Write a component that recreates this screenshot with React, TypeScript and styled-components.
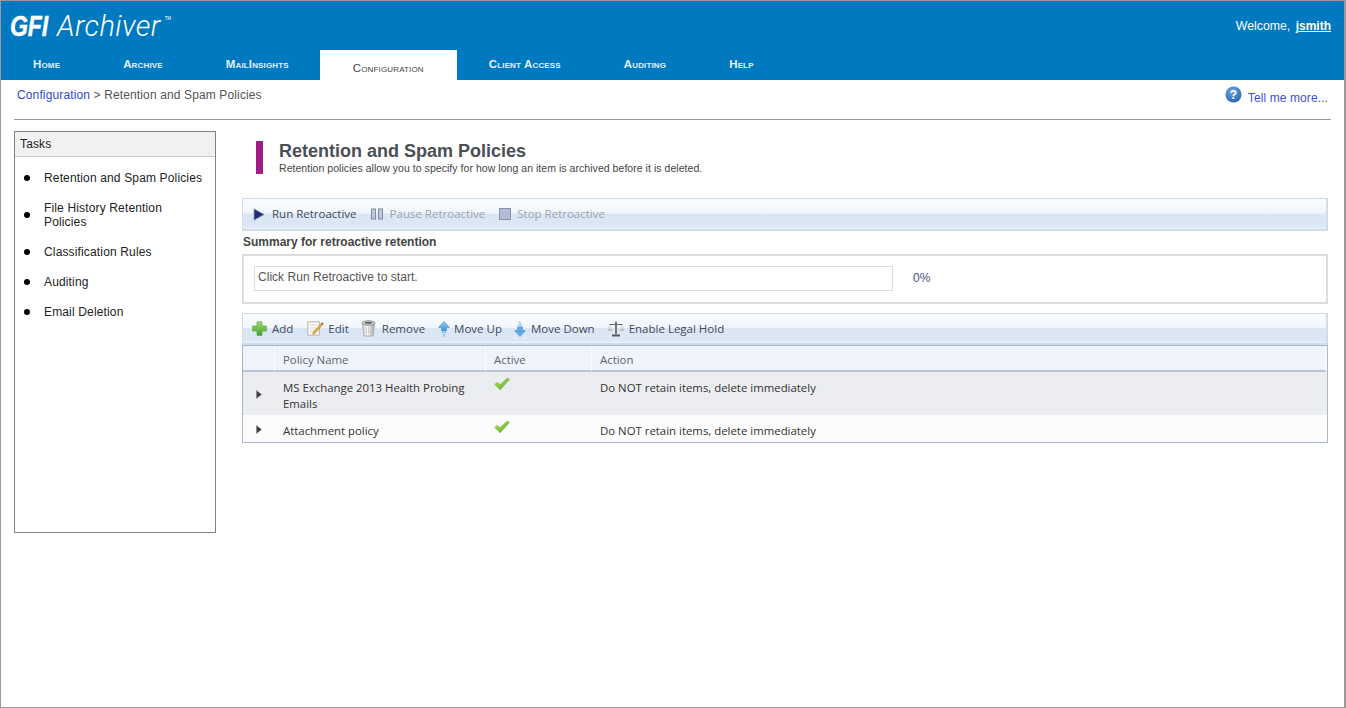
import React from "react";
import styled, { createGlobalStyle } from "styled-components";

const Global = createGlobalStyle`
  html, body { margin: 0; padding: 0; background: #fff; }
  body { font-family: "Liberation Sans", Arial, sans-serif; font-size: 12px; color: #333; }
`;
const uiFont = `"Open Sans", "Noto Sans", sans-serif`;

const Page = styled.div`
  box-sizing: border-box; width: 1346px; height: 708px; border: 1px solid #9a9a9a; border-right-width: 2px;
  overflow: hidden; display: flex; flex-direction: column; background: #fff;
`;
const Header = styled.header`background: #0079c1; height: 79px; display: flex; flex-direction: column;`;
const TopRow = styled.div`height: 49px; display: flex; justify-content: space-between; align-items: flex-start;`;
const Logo = styled.div`
  margin: 8px 0 0 9px; color: #fff; font-size: 29px; line-height: 34px; font-style: italic; display: flex;
  b { display: block; width: 47px; font-weight: 700; letter-spacing: -0.3px; white-space: nowrap; transform: scaleX(0.8); transform-origin: left center; -webkit-text-stroke: 0.4px #fff; }
  span { font-family: Roboto, "Liberation Sans", sans-serif; font-weight: 300; letter-spacing: 0.4px; }
  sup { font-size: 4.5px; line-height: 8px; font-style: normal; margin: 6px 0 0 4px; }
`;
const Welcome = styled.div`
  margin: 17px 13px 0 0; color: #fff; font-size: 12.3px; line-height: 16px;
  a { color: #fff; font-weight: 700; text-decoration: underline; margin-left: 2px; font-size: 12px; }
`;
const Nav = styled.nav`height: 30px; display: flex;`;
const Tab = styled.a<{ $active?: boolean }>`
  padding: ${(p) => (p.$active ? "11px 33px 0" : "7px 31px 0 32px")}; box-sizing: border-box; height: 30px;
  font-variant: small-caps; font-size: 11.5px; line-height: 14px; letter-spacing: 0.15px; font-weight: ${(p) => (p.$active ? 400 : 700)};
  color: ${(p) => (p.$active ? "#444" : "#e6f1f8")}; background: ${(p) => (p.$active ? "#fff" : "transparent")};
`;
const Crumbs = styled.div`
  box-sizing: border-box; display: flex; justify-content: space-between; margin-left: 13px; padding-left: 3px;
  border-bottom: 1px solid #999; width: 1317px; flex: 0 0 40px; height: 40px;
`;
const CrumbText = styled.div`
  padding-top: 8px; line-height: 15px; color: #555; font-size: 12px; letter-spacing: 0.13px;
  a { color: #2f49d1; }
`;
const Help = styled.a`
  display: flex; align-items: flex-start; color: #3f51d5; font-size: 12px; letter-spacing: 0.1px; margin: 6px 3px 0 0; gap: 6px; line-height: 14px;
  span { padding-top: 5px; }
`;
const Content = styled.div`display: flex; padding: 11px 0 0 13px; gap: 26px; align-items: flex-start;`;
const Sidebar = styled.aside`box-sizing: border-box; width: 202px; height: 402px; border: 1px solid #808080; flex: none;`;
const SideTitle = styled.div`height: 25px; box-sizing: border-box; background: #f1f1f1; border-bottom: 1px solid #c8c8c8; padding: 5px 5px; line-height: 14px; color: #222; letter-spacing: 0.15px;`;
const TaskList = styled.ul`list-style: none; margin: 0; padding: 14px 0 0 9px; display: flex; flex-direction: column; gap: 16px;`;
const TaskItem = styled.li`display: flex; align-items: center; gap: 14px; line-height: 14px; color: #222; letter-spacing: 0.15px;
  &::before { content: ""; width: 6px; height: 6px; border-radius: 50%; background: #000; flex: none; }
`;
const TaskLabel = styled.span`max-width: 160px;`;
const Main = styled.main`width: 1086px; flex: none;`;
const TitleBlock = styled.div`display: flex; margin: 10px 0 24px 14px; height: 33px; gap: 16px;`;
const Accent = styled.div`width: 7px; background: #a01c82;`;
const TitleText = styled.div`
  h1 { margin: 0; font-size: 18px; line-height: 20px; font-weight: 700; color: #4a4f55; }
  p { margin: 0; font-size: 10.5px; line-height: 14px; color: #444; letter-spacing: 0.045px; }
`;
const Toolbar = styled.div<{ $h: number; $pl: number }>`
  box-sizing: border-box; height: ${(p) => p.$h}px; display: flex; align-items: center; padding: 0 0 0 ${(p) => p.$pl}px;
  border: 2px solid #d0dce8; border-width: 1px 2px 2px 1px;
  background: linear-gradient(#fafcfe 0%, #f0f6fc 48%, #dbe6f4 49%, #dce7f5 90%, #eaf1f9 100%);
  font-family: ${uiFont}; font-size: 11.5px; color: #414b5a;
`;
const ToolButton = styled.button<{ $disabled?: boolean; $gap?: number; $after?: number }>`
  all: unset; display: flex; align-items: center; gap: ${(p) => p.$gap ?? 6}px; margin-right: ${(p) => p.$after ?? 13}px;
  color: ${(p) => (p.$disabled ? "#9aa3ae" : "#414b5a")}; line-height: 16px; white-space: nowrap;
`;
const SummaryTitle = styled.div`margin: 4px 0 4px 1px; font-weight: 700; color: #444; line-height: 15px; font-size: 12px;`;
const SummaryBox = styled.div`box-sizing: border-box; height: 50px; border: 2px solid #dcdcdc; display: flex; align-items: center; padding: 0 0 1px 10px; margin-bottom: 9px;`;
const Progress = styled.div`box-sizing: border-box; width: 639px; height: 25px; border: 1px solid #dcdcdc; padding: 3px 3px; line-height: 14px; color: #555; letter-spacing: 0.03px;`;
const Percent = styled.div`margin: 0 0 2px 20px; color: #46507a; font-size: 12px;`;
const GridWrap = styled.div`border: 1px solid #a9b6ca; box-sizing: border-box;`;
const Table = styled.table`
  width: 100%; border-collapse: separate; border-spacing: 0; table-layout: fixed; font-family: ${uiFont}; font-size: 11.4px; color: #333;
`;
const HeadCell = styled.th<{ $w?: number }>`
  width: ${(p) => (p.$w ? `${p.$w}px` : "auto")}; height: 26px; box-sizing: border-box; background: #eff3fc; padding: 3px 8px 0; text-align: left;
  font-weight: 400; color: #5b6470; border-bottom: 2px solid #bac5d6; border-right: 1px solid #f9fbff;
  &:last-child { border-right: 2px solid #f9fbff; }
`;
const Row = styled.tr<{ $alt?: boolean }>`background: ${(p) => (p.$alt ? "#fcfcfc" : "#ebedf1")};`;
const Cell = styled.td`vertical-align: top; padding: 8px 8px 3px; line-height: 16px; box-sizing: border-box;`;
const IconCell = styled.td`vertical-align: top; padding: 5px 8px 0; line-height: 0;`;
const ExpandCell = styled.td`vertical-align: middle; padding: 2px 0 0 13px; line-height: 0;`;

const Play = () => (
  <svg width="12" height="13" viewBox="0 0 12 13"><path d="M1 .8 11.2 6.5 1 12.2Z" fill="#1f2f72" stroke="#8d9cc8" strokeWidth=".8" /></svg>
);
const Pause = () => (
  <svg width="12" height="12" viewBox="0 0 12 12"><g fill="#bcc7dc" stroke="#7f8ba6"><rect x=".5" y="1" width="4" height="10" /><rect x="7.5" y="1" width="4" height="10" /></g></svg>
);
const Stop = () => (
  <svg width="12" height="12" viewBox="0 0 12 12"><rect x=".5" y=".5" width="11" height="11" fill="#b2bdd5" stroke="#8792ad" /></svg>
);
const Plus = () => (
  <svg width="15" height="15" viewBox="0 0 15 15"><defs><linearGradient id="pg" x1="0" y1="0" x2="0" y2="1"><stop offset="0" stopColor="#a5dc6e" /><stop offset="1" stopColor="#3c9e2c" /></linearGradient></defs>
    <path d="M5 .8h5V5h4.4v5H10v4.4H5V10H.6V5H5Z" fill="url(#pg)" stroke="#5fa843" strokeWidth=".7" /></svg>
);
const EditIcon = () => (
  <svg width="17" height="15" viewBox="0 0 17 15"><path d="M.8.8h11.6v13.4H.8Z" fill="#fbfaf2" stroke="#b5b5ad" /><path d="M3 4h8M3 7h6M3 10h5" stroke="#d5d5ce" /><path d="M6.5 11 15 1.6l1.3 1.3-8.2 9.3-2.5 1Z" fill="#e9b23d" stroke="#a9752a" strokeWidth=".6" /><path d="M14 2.6 15 1.6l1.3 1.3-1 1Z" fill="#c2563f" /></svg>
);
const Trash = () => (
  <svg width="15" height="17" viewBox="0 0 15 17"><defs><linearGradient id="tg" x1="0" x2="1"><stop offset="0" stopColor="#d6d6d6" /><stop offset=".45" stopColor="#f6f6f6" /><stop offset="1" stopColor="#a8a8a8" /></linearGradient></defs>
    <path d="M1.6 4 3 16h9l1.4-12Z" fill="url(#tg)" stroke="#999" strokeWidth=".7" /><ellipse cx="7.5" cy="3" rx="6.6" ry="2.3" fill="#c4c4c4" stroke="#888" strokeWidth=".7" /><ellipse cx="7.5" cy="2.8" rx="3.6" ry="1" fill="#666" /><path d="M5 7l.4 7M7.5 7v7M10 7l-.4 7" stroke="#bdbdbd" strokeWidth=".7" /></svg>
);
const ArrowUp = () => (
  <svg width="12" height="16" viewBox="0 0 12 16"><defs><linearGradient id="ag" x1="0" y1="0" x2="0" y2="1"><stop offset="0" stopColor="#8ed0f2" /><stop offset="1" stopColor="#3b8fdc" /></linearGradient></defs>
    <path d="M6 .5 11.5 6.5H8.5V10H3.5V6.5H.5Z" fill="url(#ag)" stroke="#4c93c9" strokeWidth=".6" /><path d="M4 11.5h4M4.5 13.2h3M5 15h2" stroke="#5aa6e0" strokeWidth="1" strokeDasharray="1 .6" /></svg>
);
const ArrowDown = () => (
  <svg width="12" height="16" viewBox="0 0 12 16"><path d="M5 1h2M4.5 2.8h3M4 4.5h4" stroke="#5aa6e0" strokeWidth="1" strokeDasharray="1 .6" /><path d="M3.5 6H8.5V9.5H11.5L6 15.5.5 9.5H3.5Z" fill="#5aa8e8" stroke="#4c93c9" strokeWidth=".6" /></svg>
);
const Scale = () => (
  <svg width="16" height="16" viewBox="0 0 16 16" fill="none" stroke="#6b6b6b"><circle cx="8" cy="1.6" r="1.2" fill="#777" stroke="none" /><path d="M8 2v11" strokeWidth="1.8" /><path d="M1.5 3.5h13" /><path d="M0 9h4M12 9h4" strokeWidth="1.2" stroke="#999" /><path d="M1.5 4 .5 8.5M2.5 4l1 4.5M14.5 4l1 4.5M13.5 4l-1 4.5" stroke="#c4c4c4" strokeWidth=".6" /><path d="M4 14.5h8" strokeWidth="2" stroke="#555" /></svg>
);
const Check = () => (
  <svg width="16" height="14" viewBox="0 0 16 14"><defs><linearGradient id="cg" x1="0" y1="0" x2="1" y2="1"><stop offset="0" stopColor="#b7e36a" /><stop offset=".6" stopColor="#7fc03a" /><stop offset="1" stopColor="#4f9a1e" /></linearGradient></defs>
    <path d="M.5 7.5 3 5.2 6 7.6 13.5 .8 15.5 2.4 6.2 13Z" fill="url(#cg)" stroke="#79ad55" strokeWidth=".4" /></svg>
);
const Expander = () => (
  <svg width="6" height="9" viewBox="0 0 6 9"><path d="M.5.5 5.5 4.5.5 8.5Z" fill="#3a3a3a" stroke="#8a8a8a" strokeWidth=".6" /></svg>
);
const HelpIcon = () => (
  <svg width="17" height="17" viewBox="0 0 17 17"><defs><radialGradient id="hg" cx=".4" cy=".3" r=".8"><stop offset="0" stopColor="#6fa8e4" /><stop offset="1" stopColor="#1f5fb0" /></radialGradient></defs>
    <circle cx="8.5" cy="8.5" r="8" fill="url(#hg)" /><text x="8.5" y="13" textAnchor="middle" fontSize="12" fontWeight="700" fill="#fff" fontFamily="Liberation Sans">?</text></svg>
);

const tabs = ["Home", "Archive", "MailInsights", "Configuration", "Client Access", "Auditing", "Help"];
const tasks = ["Retention and Spam Policies", "File History Retention Policies", "Classification Rules", "Auditing", "Email Deletion"];
const policies = [
  { name: "MS Exchange 2013 Health Probing Emails", action: "Do NOT retain items, delete immediately" },
  { name: "Attachment policy", action: "Do NOT retain items, delete immediately" },
];

export default function App() {
  return (
    <Page>
      <Global />
      <Header>
        <TopRow>
          <Logo><b>GFI</b><span>Archiver</span><sup>TM</sup></Logo>
          <Welcome>Welcome, <a>jsmith</a></Welcome>
        </TopRow>
        <Nav>
          {tabs.map((t) => <Tab key={t} $active={t === "Configuration"}>{t}</Tab>)}
        </Nav>
      </Header>
      <Crumbs>
        <CrumbText><a>Configuration</a> &gt; Retention and Spam Policies</CrumbText>
        <Help><HelpIcon /><span>Tell me more...</span></Help>
      </Crumbs>
      <Content>
        <Sidebar>
          <SideTitle>Tasks</SideTitle>
          <TaskList>
            {tasks.map((t) => <TaskItem key={t}><TaskLabel>{t}</TaskLabel></TaskItem>)}
          </TaskList>
        </Sidebar>
        <Main>
          <TitleBlock>
            <Accent />
            <TitleText>
              <h1>Retention and Spam Policies</h1>
              <p>Retention policies allow you to specify for how long an item is archived before it is deleted.</p>
            </TitleText>
          </TitleBlock>
          <Toolbar $h={33} $pl={10}>
            <ToolButton $gap={7} $after={14}><Play />Run Retroactive</ToolButton>
            <ToolButton $disabled $gap={7} $after={14}><Pause />Pause Retroactive</ToolButton>
            <ToolButton $disabled><Stop />Stop Retroactive</ToolButton>
          </Toolbar>
          <SummaryTitle>Summary for retroactive retention</SummaryTitle>
          <SummaryBox>
            <Progress>Click Run Retroactive to start.</Progress>
            <Percent>0%</Percent>
          </SummaryBox>
          <Toolbar $h={32} $pl={9}>
            <ToolButton $gap={5} $after={14}><Plus />Add</ToolButton>
            <ToolButton $gap={4} $after={12}><EditIcon />Edit</ToolButton>
            <ToolButton><Trash />Remove</ToolButton>
            <ToolButton $gap={4} $after={12}><ArrowUp />Move Up</ToolButton>
            <ToolButton $gap={5}><ArrowDown />Move Down</ToolButton>
            <ToolButton $gap={5}><Scale />Enable Legal Hold</ToolButton>
          </Toolbar>
          <GridWrap>
            <Table>
              <thead>
                <tr>
                  <HeadCell $w={32} />
                  <HeadCell $w={211}>Policy Name</HeadCell>
                  <HeadCell $w={106}>Active</HeadCell>
                  <HeadCell>Action</HeadCell>
                </tr>
              </thead>
              <tbody>
                {policies.map((p, i) => (
                  <Row key={p.name} $alt={i === 1}>
                    <ExpandCell><Expander /></ExpandCell>
                    <Cell>{p.name}</Cell>
                    <IconCell><Check /></IconCell>
                    <Cell>{p.action}</Cell>
                  </Row>
                ))}
              </tbody>
            </Table>
          </GridWrap>
        </Main>
      </Content>
    </Page>
  );
}
